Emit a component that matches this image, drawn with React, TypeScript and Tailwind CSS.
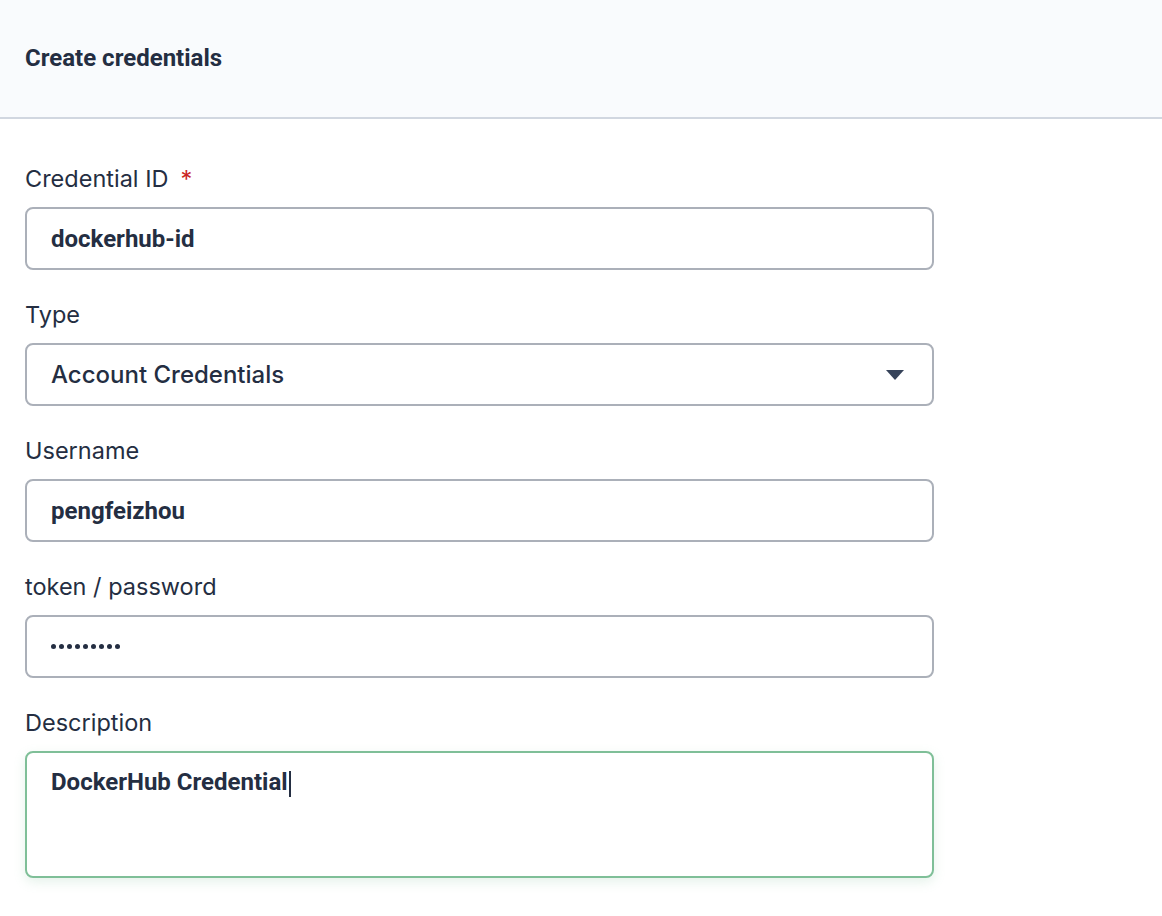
import React from "react";

const labelCls = "h-[28px] flex items-center text-[23.5px] leading-[28px] text-[#242e42] font-['Inter','Liberation_Sans',sans-serif]";
const inputCls = "h-[63px] w-[909px] rounded-[8px] border-2 border-[#abb0b9] bg-white flex items-center pl-[24px] pr-[30px] text-[24px] font-bold text-[#242e42] font-['Roboto','Liberation_Sans',sans-serif]";

export default function App() {
  return (
    <div className="w-[1162px] h-[916px] bg-white overflow-hidden">
      <div className="h-[119px] bg-[#f9fbfd] border-b-2 border-[#d1d7e0] flex items-center px-[25px] pb-[2px]">
        <h1 className="text-[24px] font-bold text-[#242e42] font-['Roboto','Liberation_Sans',sans-serif]">Create credentials</h1>
      </div>
      <div className="px-[25px] pt-[46px] flex flex-col">
        <div className={labelCls}>
          Credential ID<span className="ml-[12px] text-[#ca2621]">*</span>
        </div>
        <div className={inputCls + " mt-[14px]"}>dockerhub-id</div>

        <div className={labelCls + " mt-[31px]"}>Type</div>
        <div className={inputCls + " mt-[14px] justify-between"}>
          <span className="font-['Inter','Liberation_Sans',sans-serif] font-medium">Account Credentials</span>
          <svg width="18" height="10" viewBox="0 0 18 10" className="-mr-[2px]">
            <path d="M0 0 L18 0 L9 10 Z" fill="#36435a" />
          </svg>
        </div>

        <div className={labelCls + " mt-[31px]"}>Username</div>
        <div className={inputCls + " mt-[14px]"}>pengfeizhou</div>

        <div className={labelCls + " mt-[31px]"}>token / password</div>
        <div className={inputCls + " mt-[14px]"}>
          <div className="flex gap-[3px]">
            {Array.from({ length: 9 }).map((_, i) => (
              <span key={i} className="block w-[5px] h-[5px] rounded-full bg-[#242e42]" />
            ))}
          </div>
        </div>

        <div className={labelCls + " mt-[31px]"}>Description</div>
        <div className="mt-[14px] h-[127px] w-[909px] rounded-[8px] border-2 border-[#7fbf98] bg-white shadow-[0_4px_12px_rgba(127,191,152,0.2)] pl-[24px] pt-[14px] text-[24px] font-bold text-[#242e42] font-['Roboto','Liberation_Sans',sans-serif] leading-[30px]">
          DockerHub Credential<span className="inline-block w-[2px] h-[26px] bg-[#242e42] align-middle ml-[1px]"></span>
        </div>
      </div>
    </div>
  );
}
